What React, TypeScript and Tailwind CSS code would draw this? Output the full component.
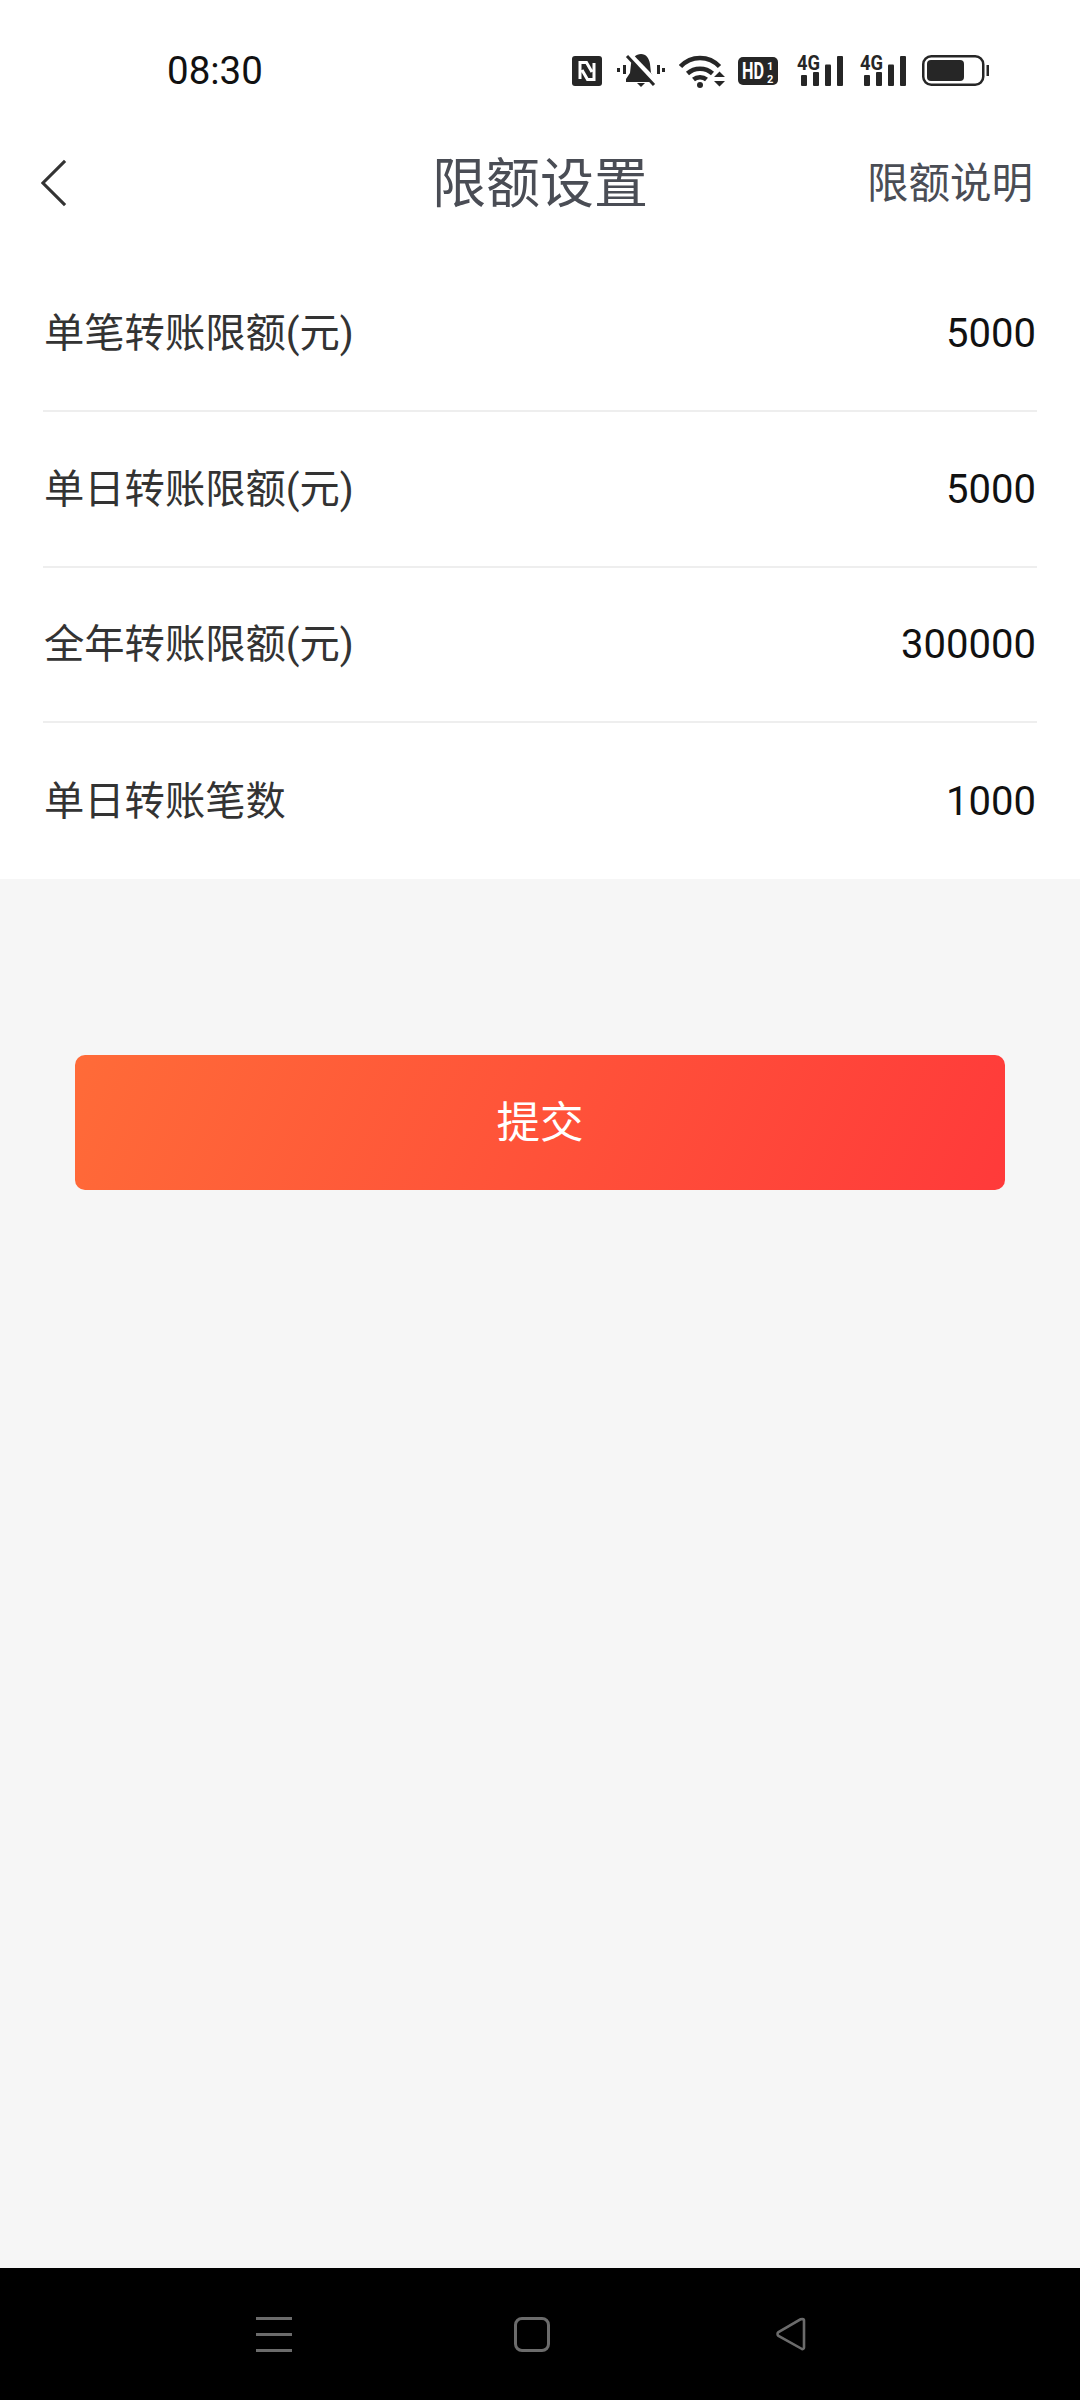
import React from "react";

interface LimitRow {
    label: string;
    value: string;
}

const rows: LimitRow[] = [
    { label: "单笔转账限额(元)", value: "5000" },
    { label: "单日转账限额(元)", value: "5000" },
    { label: "全年转账限额(元)", value: "300000" },
    { label: "单日转账笔数", value: "1000" },
];

const NfcIcon = () => (
    <svg width="30" height="30" viewBox="0 0 30 30" className="shrink-0">
        <rect width="30" height="30" rx="3" fill="#262626" />
        <path d="M8 23V6.500h6.500L20 16M22 7v16.500h-6.500L10 14" fill="none" stroke="#fff" strokeWidth="3" />
    </svg>
);

const MuteBellIcon = () => (
    <svg width="48" height="34" viewBox="0 0 48 34" className="shrink-0">
        <path d="M24 0c5 0 8 4 9 10l1 9 4 6v3H9v-3l4-6 1-9c1-6 5-10 10-10z" fill="#262626" />
        <path d="M20 29h8l-4 4z" fill="#262626" />
        <path d="M11 0l28 29" stroke="#fff" strokeWidth="6.500" />
        <path d="M10 2l27 29" stroke="#262626" strokeWidth="3" />
        <rect x="0" y="14" width="3" height="4" fill="#262626" />
        <rect x="6" y="11" width="3" height="9" fill="#262626" />
        <rect x="40" y="11" width="3" height="9" fill="#262626" />
        <rect x="45" y="14" width="3" height="4" fill="#262626" />
    </svg>
);

const WifiIcon = () => (
    <svg width="46" height="34" viewBox="0 0 46 34" className="shrink-0">
        <path d="M1.500 12.500C12 1 30 1 40.500 12.500" fill="none" stroke="#262626" strokeWidth="4.500" />
        <path d="M8.500 19.500c7-6.500 18-6.500 25 0" fill="none" stroke="#262626" strokeWidth="4.500" />
        <path d="M14.500 25.500c3.500-3 9.500-3 13 0" fill="none" stroke="#262626" strokeWidth="4.500" />
        <circle cx="21" cy="31" r="3" fill="#262626" />
        <path d="M35 23l5.500-5.500L46 23zM35 27h11l-5.500 5.500z" fill="#262626" />
    </svg>
);

const HdIcon = () => (
    <svg width="40" height="28" viewBox="0 0 40 28" className="shrink-0 overflow-visible">
        <rect width="40" height="28" rx="5" fill="#262626" />
        <text x="4" y="22" fontFamily="Roboto, sans-serif" fontWeight="700" fontSize="24" fill="#fff" textLength="22" lengthAdjust="spacingAndGlyphs">HD</text>
        <text x="29" y="12.500" fontFamily="Roboto, sans-serif" fontWeight="700" fontSize="11" fill="#fff">1</text>
        <text x="29" y="25.500" fontFamily="Roboto, sans-serif" fontWeight="700" fontSize="11" fill="#fff">2</text>
    </svg>
);

const SignalIcon = () => (
    <svg width="46" height="32" viewBox="0 0 46 32" className="shrink-0 overflow-visible">
        <text x="0" y="14.500" fontFamily="Roboto, sans-serif" fontWeight="700" fontSize="20" fill="#262626" textLength="23" lengthAdjust="spacingAndGlyphs">4G</text>
        <rect x="4" y="20" width="6" height="11" rx="1" fill="#262626" />
        <rect x="16" y="17" width="6" height="14" rx="1" fill="#262626" />
        <rect x="28" y="9.500" width="6" height="21.500" rx="1" fill="#262626" />
        <rect x="40" y="1" width="6" height="30" rx="1" fill="#262626" />
    </svg>
);

const BatteryIcon = () => (
    <svg width="67" height="32" viewBox="0 0 67 32" className="shrink-0">
        <rect x="1.250" y="1.250" width="60" height="28.500" rx="8" fill="none" stroke="#262626" strokeWidth="2.500" />
        <rect x="5" y="5" width="37" height="21" rx="4" fill="#262626" />
        <rect x="64.500" y="10" width="2.500" height="11" fill="#262626" />
    </svg>
);

const App: React.FC = () => {
    return (
        <div className="flex flex-col h-[2400px] bg-[#f6f6f6] font-['Roboto','Noto_Sans_CJK_SC',sans-serif]">
            <div className="flex items-center h-[142px] pl-[167px] pr-[91px] bg-white">
                <span className="text-[38.5px] leading-none text-[#111]">08:30</span>
                <div className="flex items-center ml-auto">
                    <NfcIcon />
                    <div className="ml-[15px]"><MuteBellIcon /></div>
                    <div className="ml-[14px]"><WifiIcon /></div>
                    <div className="ml-[13px]"><HdIcon /></div>
                    <div className="ml-[19px]"><SignalIcon /></div>
                    <div className="ml-[17px]"><SignalIcon /></div>
                    <div className="ml-[16px]"><BatteryIcon /></div>
                </div>
            </div>

            <div className="relative flex items-center justify-center h-[84px] bg-white">
                <svg width="26" height="50" viewBox="0 0 27 50" className="absolute left-[41px] top-[16px]">
                    <path d="M25 2L2 25l23 23" fill="none" stroke="#333" strokeWidth="3.200" />
                </svg>
                <h1 className="pt-[2px] text-[54px] leading-none font-normal text-[#4a4d55]">限额设置</h1>
                <span className="absolute right-[47px] text-[41.5px] leading-none text-[#4a4d55]">限额说明</span>
            </div>

            <div className="pt-[30.5px] px-[43px] bg-white">
                {rows.map((row, i) => (
                    <div
                        key={row.label}
                        className={`flex items-center justify-between h-[155.5px] pl-px pr-px pt-[2px] ${i < rows.length - 1 ? "border-b-2 border-[#eeeeee]" : ""}`}
                    >
                        <span className="text-[40.3px] leading-none text-[#333]">{row.label}</span>
                        <span className="text-[40px] leading-none text-[#111]">{row.value}</span>
                    </div>
                ))}
            </div>

            <button className="flex items-center justify-center pt-[2px] mt-[176.5px] mx-[75px] h-[135px] rounded-[10px] bg-[linear-gradient(115deg,#ff6b38,#ff3a3a)] text-white text-[43.5px] leading-none">
                提交
            </button>

            <div className="mt-auto flex items-center h-[132px] bg-black">
                <div className="flex flex-col gap-[13px] ml-[256px] w-[36px]">
                    <div className="h-[3px] bg-[#6b6b6b]" />
                    <div className="h-[3px] bg-[#6b6b6b]" />
                    <div className="h-[3px] bg-[#6b6b6b]" />
                </div>
                <div className="ml-[222px] w-[36px] h-[35px] rounded-[8px] border-[3px] border-[#6b6b6b]" />
                <svg width="35" height="36" viewBox="0 0 30 36" className="ml-[223px]">
                    <path d="M27 3a1.500 1.500 0 0 1 1.500 1.500v27a1.500 1.500 0 0 1-2.500 1.200L3 20a2.500 2.500 0 0 1 0-4L25 3.300z" fill="none" stroke="#6b6b6b" strokeWidth="2.600" />
                </svg>
            </div>
        </div>
    );
};

export default App;
